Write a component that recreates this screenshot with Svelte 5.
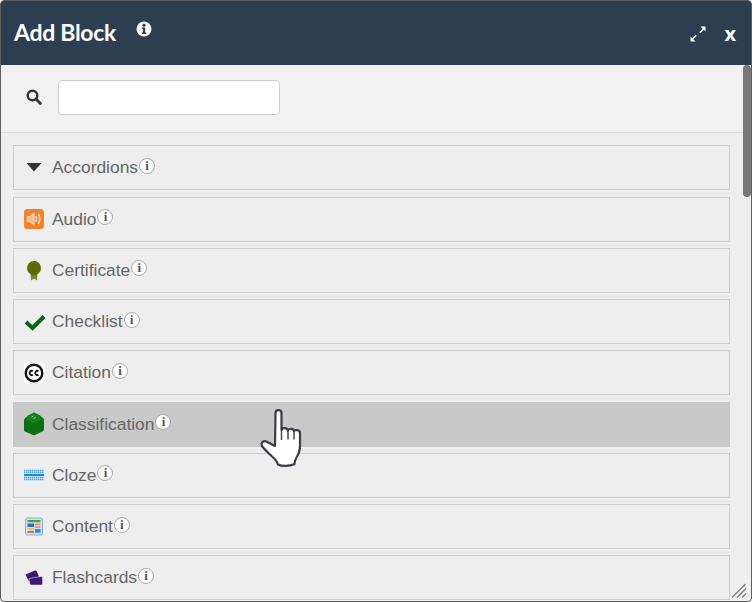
<script>
  const blocks = [
    { name: 'Accordions', icon: 'accordion' },
    { name: 'Audio', icon: 'audio' },
    { name: 'Certificate', icon: 'certificate' },
    { name: 'Checklist', icon: 'check' },
    { name: 'Citation', icon: 'cc' },
    { name: 'Classification', icon: 'box', hover: true },
    { name: 'Cloze', icon: 'cloze' },
    { name: 'Content', icon: 'content' },
    { name: 'Flashcards', icon: 'cards' }
  ];
</script>

<div class="window">
  <header class="head">
    <h1>Add Block</h1>
    <svg class="head-info" width="16" height="16" viewBox="0 0 16 16">
      <circle cx="8" cy="8" r="7.500" fill="#fff" />
      <circle cx="8" cy="4.200" r="1.600" fill="#2d3e50" />
      <path d="M5.800 6.500h3.400v5h1.200v1.500H5.800v-1.500H7v-3.500H5.800z" fill="#2d3e50" />
    </svg>
    <div class="head-actions">
      <svg width="18" height="18" viewBox="0 0 18 18" fill="#fff">
        <path d="M11.500 1.500h5v5l-1.700-1.700-3.500 3.500-1.100-1.100 3.500-3.500z" />
        <path d="M6.500 16.500h-5v-5l1.700 1.700 3.500-3.500 1.100 1.100-3.500 3.500z" />
      </svg>
      <span class="close">x</span>
    </div>
  </header>

  <div class="body">
    <div class="search">
      <svg width="16" height="16" viewBox="0 0 16 16" fill="none" stroke="#333">
        <circle cx="6.500" cy="6.500" r="4.800" stroke-width="2.400" />
        <path d="M10 10l4.400 4.400" stroke-width="2.800" stroke-linecap="round" />
      </svg>
      <input type="text" />
    </div>

    <div class="list">
      {#each blocks as block}
        <div class="wrap">
          <div class="row" class:hover={block.hover}>
            <span class="icon">
              {#if block.icon === 'accordion'}
                <svg width="20" height="20" viewBox="0 0 20 20"><path d="M2.500 5h15l-7.500 8.500z" fill="#333" /></svg>
              {:else if block.icon === 'audio'}
                <svg width="20" height="20" viewBox="0 0 20 20">
                  <rect width="20" height="20" rx="3.500" fill="#f58228" />
                  <path d="M3.500 7.500h2.500L10 4.500v11l-4-3H3.500z" fill="#f9b888" stroke="#fde0c8" stroke-width="1.200" />
                  <path d="M12 7q1.500 3 0 6M14.500 5q2.500 5 0 10" fill="none" stroke="#fde0c8" stroke-width="1.500" />
                </svg>
              {:else if block.icon === 'certificate'}
                <svg width="20" height="21" viewBox="0 0 20 21">
                  <path d="M6.500 13l.5 7.500 3-2 3 2 .5-7.500z" fill="#76842a" />
                  <circle cx="10" cy="8" r="7" fill="#5f6b00" />
                </svg>
              {:else if block.icon === 'check'}
                <svg width="22" height="20" viewBox="0 0 22 20"><path d="M2 10l6.500 6L20 4.500" fill="none" stroke="#0b6417" stroke-width="4" /></svg>
              {:else if block.icon === 'cc'}
                <svg width="20" height="20" viewBox="0 0 20 20">
                  <rect width="20" height="20" fill="#fff" />
                  <circle cx="10" cy="10" r="8.300" fill="#fff" stroke="#111" stroke-width="2.400" />
                  <path d="M8.900 8.300a2.100 2.100 0 1 0 0 3.400M14.500 8.300a2.100 2.100 0 1 0 0 3.400" fill="none" stroke="#111" stroke-width="1.800" />
                </svg>
              {:else if block.icon === 'box'}
                <svg class="box" width="22" height="24" viewBox="0 0 22 24">
                  <path d="M11 .5l6 3 3.500 3q.5.500.5 1.500v9q0 1.500-1 2L12 23q-1 .5-2 0l-8-3.500q-1-.5-1-2v-9q0-1 .5-1.500L5 3.500z" fill="#0b6e10" />
                  <path d="M11 .5l9.500 6L11 11 1.500 6.500z" fill="#0f8418" />
                  <path d="M8.500 5l2-1.200M10.500 6.500l2-1.200" stroke="#c2dcc2" stroke-width="1" />
                </svg>
              {:else if block.icon === 'cloze'}
                <svg width="20" height="20" viewBox="0 0 20 20">
                  <path d="M0 5.500h20M0 7.500h20M0 12.500h20M0 14.500h20" stroke="#4aa5e6" stroke-width="1.300" stroke-dasharray="1.500 .5" />
                  <path d="M0 10h20" stroke="#1a86d6" stroke-width="2" />
                </svg>
              {:else if block.icon === 'content'}
                <svg width="20" height="20" viewBox="0 0 20 20">
                  <rect x="1.500" y="1" width="17" height="17" rx="2" fill="#d5e2f6" stroke="#8aabdd" />
                  <rect x="3.500" y="3" width="13" height="2.200" fill="#45a825" />
                  <rect x="3.500" y="6.500" width="6.500" height="3.500" fill="#1d6fd0" />
                  <rect x="3.500" y="11" width="6.500" height="1.800" fill="#f5c33c" />
                  <rect x="3.500" y="14" width="6.500" height="1.800" fill="#ee5a24" />
                  <rect x="11" y="6.500" width="5.500" height="1.600" fill="#ee8a5a" />
                  <rect x="11" y="9.200" width="5.500" height="1.600" fill="#ee8a5a" />
                  <rect x="11" y="12" width="5.500" height="3.800" fill="#1f95ea" />
                </svg>
              {:else if block.icon === 'cards'}
                <svg width="20" height="20" viewBox="0 0 20 20">
                  <path d="M1.500 6.500L11 2.500q1-.3 1.500.5l2.500 5.500-10 5z" fill="#3a1a70" />
                  <path d="M5 10.500L17 8.500q1.500-.2 1.500 1v6.500q0 1-1 1H7q-1 0-1.200-1z" fill="#3a1a70" stroke="#eee" stroke-width=".5" />
                </svg>
              {/if}
            </span>
            <span class="name">{block.name}</span>
            <span class="info">i</span>
          </div>
        </div>
      {/each}
    </div>

    <div class="thumb"></div>

    <svg class="grip" width="16" height="15" viewBox="0 0 16 15" stroke="#777" stroke-width="1.100">
      <path d="M1 14.500L14.500 1M6 14.500L15 5.500M11 14.500l4-4" />
    </svg>

    <svg class="cursor" width="46" height="60" viewBox="0 0 46 60">
      <path d="M15.500 4c0-3.800 6-3.800 6 0V21c.5-2.500 6-2.500 6.500.5 .5-2.500 6-2.300 6 .8 .5-2 6-1.500 6 1.700v12c0 5.500-1 8.500-3 11.500-1.500 2.500-2.500 5-2.500 7.500-5 2.500-13 2.500-16.500.5-1-3.500-3-5.500-6.500-8.500-3-3-7-6.500-9.500-10-1.500-3 1.500-6 4.500-4.500l8.500 4.500z"
        fill="#fff" stroke="#3c3c48" stroke-width="2.200" stroke-linejoin="round" />
      <path d="M21.500 21v10M28 21.500v9M34 22.500v8" stroke="#3c3c48" stroke-width="1.400" />
    </svg>
  </div>
</div>

<style>
  :global(body) {
    background: #fff;
  }

  .window {
    box-sizing: border-box;
    width: 752px;
    height: 602px;
    border: 1px solid #5f5f5f;
    border-radius: 4px;
    overflow: hidden;
    display: flex;
    flex-direction: column;
    font-family: "Liberation Sans", Arial, sans-serif;
    background: #eee;
  }

  .head {
    flex: none;
    height: 64px;
    background: #2d3e50;
    display: flex;
    align-items: flex-start;
    color: #fff;
  }

  h1 {
    margin: 15px 0 0 13px;
    font-family: Lato, sans-serif;
    font-size: 23px;
    line-height: 32px;
    font-weight: 700;
    letter-spacing: -0.3px;
  }

  .head-info {
    margin: 20px 0 0 20px;
  }

  .head-actions {
    margin: 24px 0 0 auto;
    padding-right: 15px;
    display: flex;
    align-items: center;
    gap: 17px;
  }

  .close {
    font-family: "Open Sans", sans-serif;
    font-size: 20px;
    font-weight: 700;
    line-height: 18px;
  }

  .body {
    flex: 1;
    min-height: 0;
    position: relative;
    display: flex;
    flex-direction: column;
    overflow: hidden;
  }

  .search {
    flex: none;
    box-sizing: border-box;
    height: 68px;
    padding: 15px 0 17px 25px;
    background: #f1f1f1;
    border-bottom: 1px solid #ddd;
    display: flex;
    align-items: center;
    gap: 16px;
  }

  .search svg {
    margin-top: -2px;
  }

  input {
    box-sizing: border-box;
    width: 222px;
    height: 35px;
    background: #fff;
    border: 1px solid #ccc;
    border-radius: 4px;
  }

  .list {
    flex: 1;
    min-height: 0;
    overflow: hidden;
    padding: 12.4px 21px 0 12px;
  }

  .wrap {
    height: 51.25px;
    box-sizing: border-box;
    position: relative;
  }

  .wrap::after {
    content: "";
    position: absolute;
    left: 0;
    right: 0;
    top: 48px;
    height: 1px;
    background: #e3e3e3;
  }

  .row {
    box-sizing: border-box;
    height: 45px;
    border: 1px solid #ccc;
    display: flex;
    align-items: center;
    padding: 0 0 0 10px;
    color: #666;
    font-size: 17.4px;
  }

  .row.hover {
    background: #c9c9c9;
    border-color: #c9c9c9;
  }

  .icon {
    width: 28px;
    height: 24px;
    flex: none;
    display: flex;
    align-items: center;
    justify-content: flex-start;
  }

  .box {
    margin-left: -1px;
  }

  .info {
    box-sizing: border-box;
    width: 16px;
    height: 16px;
    margin: -4px 0 0 1px;
    border: 1px solid #aaa;
    border-radius: 50%;
    background: #fff;
    color: #555;
    font-family: "Liberation Serif", serif;
    font-weight: 700;
    font-size: 13px;
    line-height: 14px;
    text-align: center;
  }

  .thumb {
    position: absolute;
    top: 0;
    right: 0;
    width: 8px;
    height: 132px;
    border-radius: 4px;
    background: #777;
  }

  .grip {
    position: absolute;
    right: 4px;
    bottom: 3px;
  }

  .cursor {
    position: absolute;
    left: 259px;
    top: 344px;
  }
</style>
